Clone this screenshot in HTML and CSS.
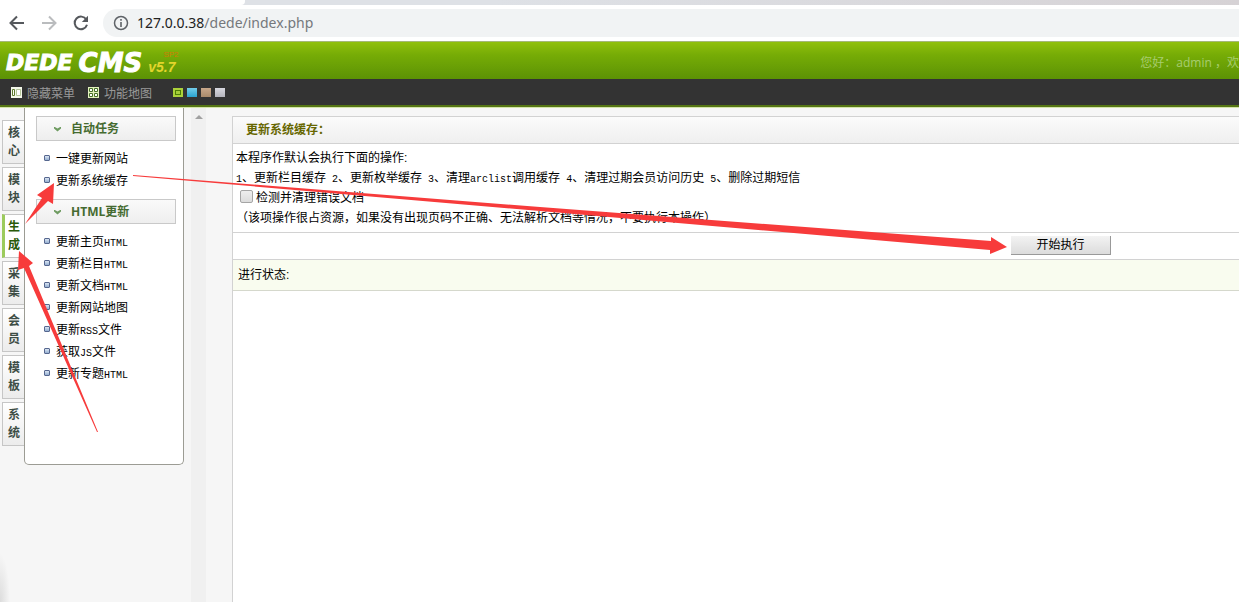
FILE: index.html
```html
<!DOCTYPE html>
<html lang="zh-CN">
<head>
  <meta charset="UTF-8">
  <meta name="viewport" content="width=device-width, initial-scale=1.0">
  <title>DedeCMS</title>
  <link rel="stylesheet" href="styles.css">
</head>
<body>
<div class="tabstrip"><div class="tab-current"></div></div>

<div class="browser-bar">
  <button class="nav-btn" aria-label="后退">
    <svg width="16" height="16" viewBox="0 0 16 16"><path d="M15 8H2.500M8 1.500L1.500 8L8 14.500" fill="none" stroke="#55585c" stroke-width="2"/></svg>
  </button>
  <button class="nav-btn" aria-label="前进">
    <svg width="16" height="16" viewBox="0 0 16 16"><path d="M1 8H13.500M8 1.500L14.500 8L8 14.500" fill="none" stroke="#babcbe" stroke-width="2"/></svg>
  </button>
  <button class="nav-btn" aria-label="刷新">
    <svg width="16" height="16" viewBox="0 0 16 16"><path d="M13.300 4.500A6.300 6.300 0 1 0 14 9.800" fill="none" stroke="#55585c" stroke-width="2"/><path d="M15 .8V7H8.800Z" fill="#55585c"/></svg>
  </button>
  <div class="address">
    <svg width="16" height="16" viewBox="0 0 16 16"><circle cx="8" cy="8" r="6.500" fill="none" stroke="#5f6368" stroke-width="1.500"/><path d="M8 7v5M8 4v1.700" stroke="#5f6368" stroke-width="1.600"/></svg>
    <span class="url"><span class="host">127.0.0.38</span>/dede/index.php</span>
  </div>
</div>

<header class="header">
  <div class="logo">
    <span class="logo-name">DEDE</span><span class="logo-name logo-cms">CMS</span>
    <span class="version">v5.7<sup class="sp">SP2</sup></span>
  </div>
  <div class="welcome">您好：admin ，欢</div>
</header>

<nav class="toolbar">
  <a href="#" class="tool">
    <svg width="11" height="11" viewBox="0 0 11 11"><path fill="#f4f8ea" d="M0 0h11v11H0z"/><path d="M1.500 2.500h2v6h-2z" fill="#fff" stroke="#5d7a2b"/><path d="M5.500 2.500h4v6h-4z" fill="#fff" stroke="#b5c69a"/></svg>
    隐藏菜单
  </a>
  <a href="#" class="tool">
    <svg width="11" height="11" viewBox="0 0 11 11"><path fill="#e4f2bf" d="M0 0h11v11H0z"/><path d="M1.500 1.500h3v3h-3zM6.500 1.500h3v3h-3zM1.500 6.500h3v3h-3zM6.500 6.500h3v3h-3z" fill="#fff" stroke="#48702a"/></svg>
    功能地图
  </a>
  <div class="skins">
    <button class="skin skin-green" aria-label="绿色"></button>
    <button class="skin skin-blue" aria-label="蓝色"></button>
    <button class="skin skin-brown" aria-label="棕色"></button>
    <button class="skin skin-gray" aria-label="灰色"></button>
  </div>
</nav>

<div class="page">
  <aside class="side">
    <div class="side-tabs">
      <a href="#" class="side-tab">核心</a>
      <a href="#" class="side-tab">模块</a>
      <a href="#" class="side-tab active">生成</a>
      <a href="#" class="side-tab">采集</a>
      <a href="#" class="side-tab">会员</a>
      <a href="#" class="side-tab">模板</a>
      <a href="#" class="side-tab">系统</a>
    </div>
    <div class="menu">
      <h3 class="menu-title">自动任务</h3>
      <ul class="menu-list">
        <li><a href="#">一键更新网站</a></li>
        <li><a href="#">更新系统缓存</a></li>
      </ul>
      <h3 class="menu-title">HTML更新</h3>
      <ul class="menu-list">
        <li><a href="#">更新主页<span class="half">HTML</span></a></li>
        <li><a href="#">更新栏目<span class="half">HTML</span></a></li>
        <li><a href="#">更新文档<span class="half">HTML</span></a></li>
        <li><a href="#">更新网站地图</a></li>
        <li><a href="#">更新<span class="half">RSS</span>文件</a></li>
        <li><a href="#">获取<span class="half">JS</span>文件</a></li>
        <li><a href="#">更新专题<span class="half">HTML</span></a></li>
      </ul>
    </div>
  </aside>

  <div class="scrollbar"><span class="scroll-up"></span></div>

  <main class="main">
    <h2 class="main-title">更新系统缓存：</h2>
    <form class="form">
      <div class="intro">
        <p>本程序作默认会执行下面的操作:</p>
        <p class="steps">
          <span><span class="half">1</span>、更新栏目缓存</span>
          <span><span class="half">2</span>、更新枚举缓存</span>
          <span><span class="half">3</span>、清理<span class="half">arclist</span>调用缓存</span>
          <span><span class="half">4</span>、清理过期会员访问历史</span>
          <span><span class="half">5</span>、删除过期短信</span>
        </p>
        <p class="check"><input type="checkbox" id="clear"><label for="clear">检测并清理错误文档</label></p>
        <p>（该项操作很占资源，如果没有出现页码不正确、无法解析文档等情况，不要执行本操作）</p>
      </div>
      <div class="actions"><button type="button" class="run">开始执行</button></div>
    </form>
    <div class="status">进行状态:</div>
  </main>
</div>

<!-- Flechas de la guía -->
<svg class="arrows" width="1010" height="440" viewBox="0 0 1010 440">
  <path d="M133 175L540 207L991 241V237L1007 247L990 254V250L540 211L133 176Z"/>
  <path d="M25 224L42 198L37 195L54 183L53 204L48 201Z"/>
  <path d="M97 432L24 268L18 270L19 251L33 263L29 266L66 355L98 432Z"/>
</svg>
</body>
</html>
```
FILE: styles.css
```css
*, *::before {
  box-sizing: border-box;
}

html, body {
  height: 100%;
}

body {
  display: flex;
  flex-direction: column;
  margin: 0;
  overflow: hidden;
  background-color: #f6f6f6;
  color: #000;
  font-family: "Liberation Sans", "Noto Sans CJK SC", sans-serif;
  font-size: 12px;
}

a {
  color: inherit;
  text-decoration: none;
}

button {
  margin: 0;
  padding: 0;
  border: none;
  background: none;
  font: inherit;
}

h2, h3, p, ul {
  margin: 0;
  padding: 0;
}

.half {
  font-family: "Liberation Mono", monospace;
  font-size: 10px;
}

/* Navegador */
.tabstrip {
  flex: none;
  height: 5px;
  background: linear-gradient(90deg, #dee1e6 40%, #d6d2d5);
}

.tab-current {
  width: 245px;
  height: 5px;
  background-color: #fff;
  border-bottom-right-radius: 4px;
}

.browser-bar {
  flex: none;
  display: flex;
  align-items: center;
  gap: 16px;
  height: 36px;
  padding-left: 9px;
  background-color: #fff;
}

.nav-btn {
  display: flex;
  width: 16px;
  height: 16px;
}

.address {
  flex: 1;
  display: flex;
  align-items: center;
  gap: 8px;
  height: 28px;
  margin-left: -2px;
  padding-left: 10px;
  background-color: #f1f3f4;
  border-radius: 14px 0 0 14px;
}

.url {
  padding-bottom: 2px;
  color: #75787c;
  font-family: "Noto Sans", sans-serif;
  font-size: 14px;
}

.host {
  color: #222;
}

/* Cabecera */
.header {
  flex: none;
  display: flex;
  align-items: center;
  justify-content: space-between;
  height: 38px;
  padding-left: 6px;
  background: linear-gradient(#90c00c, #76ac06 35%, #5c9205);
  border-top: 1px solid #a5b878;
}

.logo {
  display: flex;
  align-items: center;
  gap: 6px;
  padding-top: 4px;
}

.logo-name {
  color: #fff;
  font-family: "DejaVu Sans", sans-serif;
  font-size: 22px;
  font-style: italic;
  font-weight: bold;
  line-height: 26px;
  -webkit-text-stroke: 1px #fff;
}

.logo-cms {
  font-size: 26px;
}

.version {
  position: relative;
  padding-top: 8px;
  color: #e3d52c;
  font-size: 14px;
  font-style: italic;
  font-weight: bold;
  line-height: 16px;
}

.sp {
  position: absolute;
  top: -4px;
  right: -3px;
  color: #d27a08;
  font-size: 8px;
  font-style: normal;
  font-weight: normal;
}

.welcome {
  padding-top: 2px;
  color: #a8cd70;
  font-family: "Open Sans", "Noto Sans CJK SC", sans-serif;
  white-space: nowrap;
}

.toolbar {
  flex: none;
  display: flex;
  align-items: center;
  gap: 13px;
  height: 28px;
  padding-left: 11px;
  background-color: #333;
  border-bottom: 2px solid #557514;
  color: #999;
}

.tool {
  display: flex;
  align-items: center;
  gap: 5px;
}

.skins {
  display: flex;
  gap: 4px;
  margin-left: 8px;
  padding-top: 1px;
}

.skin {
  width: 10px;
  height: 9px;
}

.skin-green {
  background-color: #a4cc3a;
  border: 2px solid #acd23a;
  box-shadow: inset 0 0 0 1px #4d7d05;
}

.skin-blue {
  background: linear-gradient(#73cdea, #2aa3cf);
}

.skin-brown {
  background: linear-gradient(#c8a88b, #a98a6a);
}

.skin-gray {
  background: linear-gradient(#d8d8df, #b4b4bc);
}

/* Contenido */
.page {
  flex: 1;
  display: flex;
  min-height: 0;
  border-top: 1px solid #d3e4a8;
}

.side {
  flex: none;
  display: flex;
  align-items: flex-start;
  width: 191px;
  padding-left: 2px;
  background: radial-gradient(ellipse 10px 48px at 0 100%, #dcdcdc, #f6f6f6);
}

.side-tabs {
  display: flex;
  flex-direction: column;
  gap: 3px;
  width: 22px;
  padding-top: 12px;
}

.side-tab {
  width: 22px;
  height: 44px;
  padding: 3px 4px 0 5px;
  border: 1px solid #c6c6c6;
  border-right: none;
  background: linear-gradient(#fff, #ececec);
  color: #3d4d45;
  font-size: 12px;
  font-weight: bold;
  line-height: 18px;
  word-break: break-all;
}

.side-tab.active {
  padding-left: 3px;
  border-left: 3px solid #9ccb5c;
  background: #fff;
  color: #2a5a08;
}

.menu {
  width: 160px;
  min-height: 357px;
  padding: 8px 7px 0 11px;
  background-color: #fff;
  border: 1px solid #9c9c94;
  border-top: none;
  border-radius: 0 0 5px 5px;
}

.menu-title {
  display: flex;
  align-items: center;
  height: 25px;
  padding-left: 17px;
  padding-bottom: 2px;
  border: 1px solid #c9c9c9;
  background: linear-gradient(#fafafa, #eee);
  color: #456b30;
  font-family: "Open Sans", "Noto Sans CJK SC", sans-serif;
  font-size: 12px;
}

.menu-title::before {
  content: "";
  width: 7px;
  height: 5px;
  margin-top: 3px;
  margin-right: 10px;
  background-color: #6f9c62;
  clip-path: polygon(0 0, 50% 40%, 100% 0, 100% 40%, 50% 100%, 0 40%);
}

.menu-list {
  padding: 5px 0 9px 8px;
  list-style: none;
}

.menu-list li {
  display: flex;
  align-items: center;
  height: 22px;
  white-space: nowrap;
}

.menu-list li::before {
  content: "";
  width: 6px;
  height: 6px;
  margin-top: 2px;
  margin-right: 6px;
  border: 1px solid #56678f;
  border-radius: 1px;
  background: linear-gradient(#dbe5f2, #93aed0);
}

.scrollbar {
  flex: none;
  display: flex;
  justify-content: center;
  width: 15px;
  padding-top: 7px;
  background-color: #f0f0f0;
}

.scroll-up {
  width: 0;
  height: 0;
  border: 4px solid transparent;
  border-top: none;
  border-bottom-color: #a0a0a0;
}

.main {
  flex: 1;
  min-width: 0;
  margin: 8px 0 0 26px;
  background-color: #fff;
  border-top: 1px solid #d2d2d2;
  border-left: 1px solid #d2d2d2;
}

.main-title {
  height: 27px;
  padding-left: 13px;
  border-bottom: 1px solid #d2d2d2;
  background: linear-gradient(#fbfbfb, #efefef);
  color: #666600;
  font-size: 12px;
  line-height: 26px;
}

.intro {
  padding: 4px 3px;
  border-bottom: 1px solid #d2d2d2;
  line-height: 20px;
  white-space: nowrap;
}

.steps {
  display: flex;
  gap: 6px;
  height: 20px;
}

.check {
  display: flex;
  align-items: center;
  gap: 3px;
  height: 20px;
}

.check input {
  appearance: none;
  width: 13px;
  height: 13px;
  margin: 0 0 4px 4px;
  border: 1px solid #a5a5a5;
  border-radius: 2px;
  background: linear-gradient(#eee, #dcdcdc);
}

.actions {
  display: flex;
  justify-content: flex-end;
  padding: 3px 128px 4px 0;
  border-bottom: 1px solid #d2d2d2;
}

.run {
  width: 100px;
  height: 19px;
  border-right: 1px solid #999;
  border-bottom: 1px solid #999;
  background: linear-gradient(#f3f3f3, #dcdcdc);
  line-height: 17px;
}

.status {
  padding-left: 5px;
  border-bottom: 1px solid #d5d8cc;
  background-color: #f9fcef;
  line-height: 30px;
}

.arrows {
  position: absolute;
  top: 0;
  left: 0;
  fill: #f73b3b;
  pointer-events: none;
}
```
